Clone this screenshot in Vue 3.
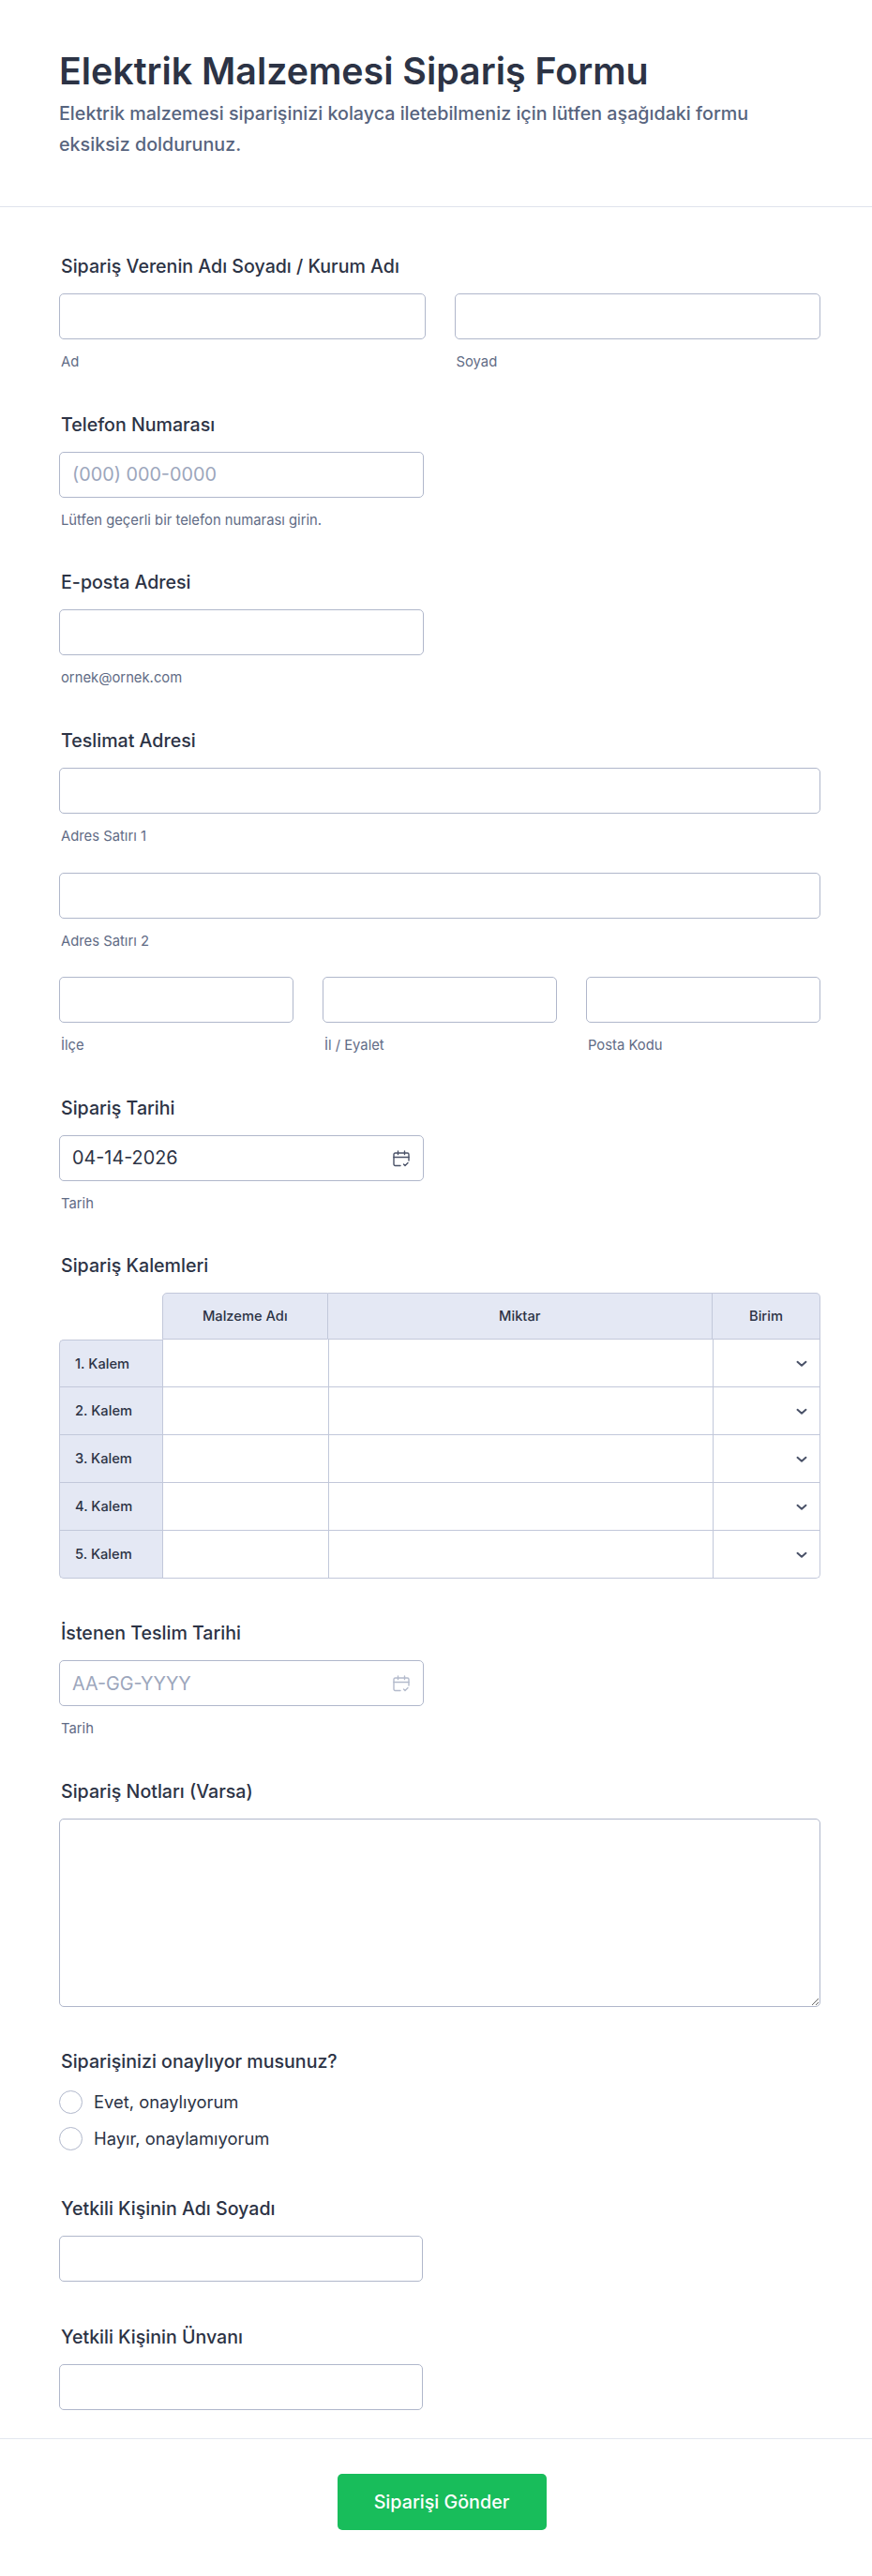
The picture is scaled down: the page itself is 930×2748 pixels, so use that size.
<script setup>
const rows = ['1. Kalem', '2. Kalem', '3. Kalem', '4. Kalem', '5. Kalem'];
const radios = ['Evet, onaylıyorum', 'Hayır, onaylamıyorum'];
</script>

<template>
  <div class="page">
    <header class="head">
      <h1 class="head__title">Elektrik Malzemesi Sipariş Formu</h1>
      <p class="head__text">Elektrik malzemesi siparişinizi kolayca iletebilmeniz için lütfen aşağıdaki formu eksiksiz doldurunuz.</p>
    </header>

    <form class="form" @submit.prevent>
      <div class="field">
        <label class="field__label">Sipariş Verenin Adı Soyadı / Kurum Adı</label>
        <div class="cols cols--2">
          <div><input class="input" type="text"><div class="sub">Ad</div></div>
          <div><input class="input" type="text"><div class="sub">Soyad</div></div>
        </div>
      </div>

      <div class="field">
        <label class="field__label">Telefon Numarası</label>
        <input class="input input--half" type="text" placeholder="(000) 000-0000">
        <div class="sub">Lütfen geçerli bir telefon numarası girin.</div>
      </div>

      <div class="field">
        <label class="field__label">E-posta Adresi</label>
        <input class="input input--half" type="text">
        <div class="sub">ornek@ornek.com</div>
      </div>

      <div class="field">
        <label class="field__label">Teslimat Adresi</label>
        <div class="stack">
          <div><input class="input" type="text"><div class="sub">Adres Satırı 1</div></div>
          <div><input class="input" type="text"><div class="sub">Adres Satırı 2</div></div>
          <div class="cols cols--3">
            <div><input class="input" type="text"><div class="sub">İlçe</div></div>
            <div><input class="input" type="text"><div class="sub">İl / Eyalet</div></div>
            <div><input class="input" type="text"><div class="sub">Posta Kodu</div></div>
          </div>
        </div>
      </div>

      <div class="field">
        <label class="field__label">Sipariş Tarihi</label>
        <div class="date">
          <input class="input" type="text" value="04-14-2026">
          <svg class="date__icon" width="18" height="18" viewBox="0 0 18 18" fill="none" stroke="#4a5268" stroke-width="1.4" stroke-linecap="round" stroke-linejoin="round">
            <path d="M8 16.500H2.500A1.500 1.500 0 0 1 1 15V4.500A1.500 1.500 0 0 1 2.500 3h13A1.500 1.500 0 0 1 17 4.500V11" />
            <path d="M1 7.500h16M5.500 1v3.500M12.500 1v3.500" />
            <path d="M11.500 15l1.500 1.500 3-3" />
          </svg>
        </div>
        <div class="sub">Tarih</div>
      </div>

      <div class="field field--table">
        <label class="field__label">Sipariş Kalemleri</label>
        <table class="matrix">
          <colgroup>
            <col class="matrix__col-a">
            <col class="matrix__col-b">
            <col class="matrix__col-c">
            <col class="matrix__col-d">
          </colgroup>
          <thead>
            <tr>
              <th class="matrix__blank"></th>
              <th class="matrix__head matrix__head--first">Malzeme Adı</th>
              <th class="matrix__head">Miktar</th>
              <th class="matrix__head matrix__head--last">Birim</th>
            </tr>
          </thead>
          <tbody>
            <tr v-for="(row, i) in rows" :key="row">
              <th class="matrix__row" :class="{ 'matrix__row--top': i === 0, 'matrix__row--end': i === rows.length - 1 }">{{ row }}</th>
              <td class="matrix__cell"></td>
              <td class="matrix__cell"></td>
              <td class="matrix__cell matrix__cell--select" :class="{ 'matrix__cell--end': i === rows.length - 1 }">
                <svg class="matrix__chevron" width="12" height="8" viewBox="0 0 12 8" fill="none" stroke="#4a5268" stroke-width="2" stroke-linecap="round" stroke-linejoin="round">
                  <path d="M1.500 1.800L6 5.800l4.500-4" />
                </svg>
              </td>
            </tr>
          </tbody>
        </table>
      </div>

      <div class="field">
        <label class="field__label">İstenen Teslim Tarihi</label>
        <div class="date">
          <input class="input" type="text" placeholder="AA-GG-YYYY">
          <svg class="date__icon" width="18" height="18" viewBox="0 0 18 18" fill="none" stroke="#b4bbcc" stroke-width="1.4" stroke-linecap="round" stroke-linejoin="round">
            <path d="M8 16.500H2.500A1.500 1.500 0 0 1 1 15V4.500A1.500 1.500 0 0 1 2.500 3h13A1.500 1.500 0 0 1 17 4.500V11" />
            <path d="M1 7.500h16M5.500 1v3.500M12.500 1v3.500" />
            <path d="M11.500 15l1.500 1.500 3-3" />
          </svg>
        </div>
        <div class="sub">Tarih</div>
      </div>

      <div class="field field--notes">
        <label class="field__label">Sipariş Notları (Varsa)</label>
        <textarea class="area"></textarea>
      </div>

      <div class="field field--radio">
        <label class="field__label field__label--radio">Siparişinizi onaylıyor musunuz?</label>
        <div class="radios">
          <label v-for="r in radios" :key="r" class="radio">
            <span class="radio__dot"></span>{{ r }}
          </label>
        </div>
      </div>

      <div class="field field--plain">
        <label class="field__label">Yetkili Kişinin Adı Soyadı</label>
        <input class="input input--short" type="text">
      </div>

      <div class="field field--last">
        <label class="field__label">Yetkili Kişinin Ünvanı</label>
        <input class="input input--short" type="text">
      </div>
    </form>

    <footer class="foot">
      <button class="foot__btn" type="button">Siparişi Gönder</button>
    </footer>
  </div>
</template>

<style>
html, body {
  margin: 0;
  background: #fff;
}
</style>

<style scoped>
.page {
  width: 930px;
  height: 2748px;
  box-sizing: border-box;
  font-family: Inter, "Liberation Sans", sans-serif;
  color: #2c3345;
  background: #fff;
  overflow: hidden;
}

.head {
  box-sizing: border-box;
  height: 221px;
  padding: 51px 63px 0;
  border-bottom: 1px solid #dfe3ec;
}

.head__title {
  margin: 0;
  font-size: 39.3px;
  line-height: 50px;
  font-weight: 600;
  color: #2c3345;
}

.head__text {
  margin: 4px 0 0;
  width: 780px;
  font-size: 19.7px;
  line-height: 32.5px;
  font-weight: 500;
  color: #57647e;
}

.form {
  box-sizing: border-box;
  width: 875px;
  padding: 51px 0 0 63px;
}

.field {
  margin-bottom: 43.7px;
}

.field--table {
  margin-bottom: 46px;
}

.field--notes {
  margin-bottom: 46px;
}

.field--radio {
  margin-bottom: 50.5px;
}

.field--plain {
  margin-bottom: 47px;
}

.field--last {
  margin-bottom: 30px;
}

.field__label {
  display: block;
  margin: 0 0 17px 2px;
  font-size: 19.6px;
  line-height: 24px;
  font-weight: 500;
  color: #2c3345;
}

.field__label--radio {
  margin-bottom: 18.5px;
}

.input {
  display: block;
  box-sizing: border-box;
  width: 100%;
  height: 49px;
  padding: 0 13px;
  border: 1px solid #b0b7cb;
  border-radius: 5px;
  background: #fff;
  font: 400 19.8px Inter, "Liberation Sans", sans-serif;
  color: #2c3345;
  outline: none;
}

.input::placeholder {
  color: #9ca6bc;
  opacity: 1;
}

.input--half {
  width: 389px;
}

.input--short {
  width: 388px;
}

.sub {
  margin: 13px 0 0 2px;
  font-size: 14.8px;
  line-height: 22px;
  color: #5f6b85;
}

.cols {
  display: grid;
  gap: 31px;
}

.cols--2 {
  grid-template-columns: 1fr 1fr;
}

.cols--3 {
  grid-template-columns: 1fr 1fr 1fr;
}

.stack {
  display: flex;
  flex-direction: column;
  gap: 27.5px;
}

.date {
  position: relative;
  width: 389px;
}

.date__icon {
  position: absolute;
  top: 16px;
  right: 15px;
}

.matrix {
  width: 812px;
  table-layout: fixed;
  border-collapse: separate;
  border-spacing: 0;
  font-size: 14.7px;
}

.matrix__col-a {
  width: 110px;
}

.matrix__col-b {
  width: 176.500px;
}

.matrix__col-c {
  width: 410.500px;
}

.matrix__col-d {
  width: 115px;
}

.matrix__blank {
  border: 0;
}

.matrix__head {
  height: 50px;
  box-sizing: border-box;
  padding: 0;
  background: #e4e8f4;
  border-top: 1px solid #c2c8da;
  border-right: 1px solid #c2c8da;
  border-bottom: 1px solid #c2c8da;
  font-weight: 500;
  color: #2c3345;
  text-align: center;
}

.matrix__head--first {
  border-left: 1px solid #c2c8da;
  border-top-left-radius: 5px;
}

.matrix__head--last {
  border-top-right-radius: 5px;
}

.matrix__row {
  height: 51px;
  box-sizing: border-box;
  padding: 0 0 0 16px;
  background: #e4e8f4;
  border-left: 1px solid #c2c8da;
  border-bottom: 1px solid #c2c8da;
  font-weight: 500;
  color: #2c3345;
  text-align: left;
}

.matrix__row--top {
  border-top: 1px solid #c2c8da;
  border-top-left-radius: 5px;
}

.matrix__row--end {
  border-bottom-left-radius: 5px;
}

.matrix__cell {
  height: 51px;
  box-sizing: border-box;
  padding: 0;
  border-left: 1px solid #c2c8da;
  border-bottom: 1px solid #c2c8da;
}

.matrix__cell--select {
  border-right: 1px solid #c2c8da;
  padding-right: 13px;
  text-align: right;
}

.matrix__cell--end {
  border-bottom-right-radius: 5px;
}

.matrix__chevron {
  display: inline-block;
  vertical-align: middle;
}

.area {
  display: block;
  box-sizing: border-box;
  width: 812px;
  height: 201px;
  border: 1px solid #b0b7cb;
  border-radius: 5px;
  background: #fff;
  outline: none;
}

.radios {
  display: flex;
  flex-direction: column;
  gap: 14px;
}

.radio {
  display: flex;
  align-items: center;
  gap: 12px;
  font-size: 18.4px;
  line-height: 25px;
  color: #2c3345;
}

.radio__dot {
  box-sizing: border-box;
  width: 25px;
  height: 25px;
  border: 1px solid #b0b7cb;
  border-radius: 50%;
}

.foot {
  display: flex;
  justify-content: center;
  box-sizing: border-box;
  padding: 37px 0 0 12px;
  border-top: 1px solid #e3e7ef;
}

.foot__btn {
  width: 223px;
  height: 60px;
  border: 0;
  border-radius: 5px;
  background: #18bd5b;
  color: #fff;
  font: 500 19.7px Inter, "Liberation Sans", sans-serif;
}
</style>
